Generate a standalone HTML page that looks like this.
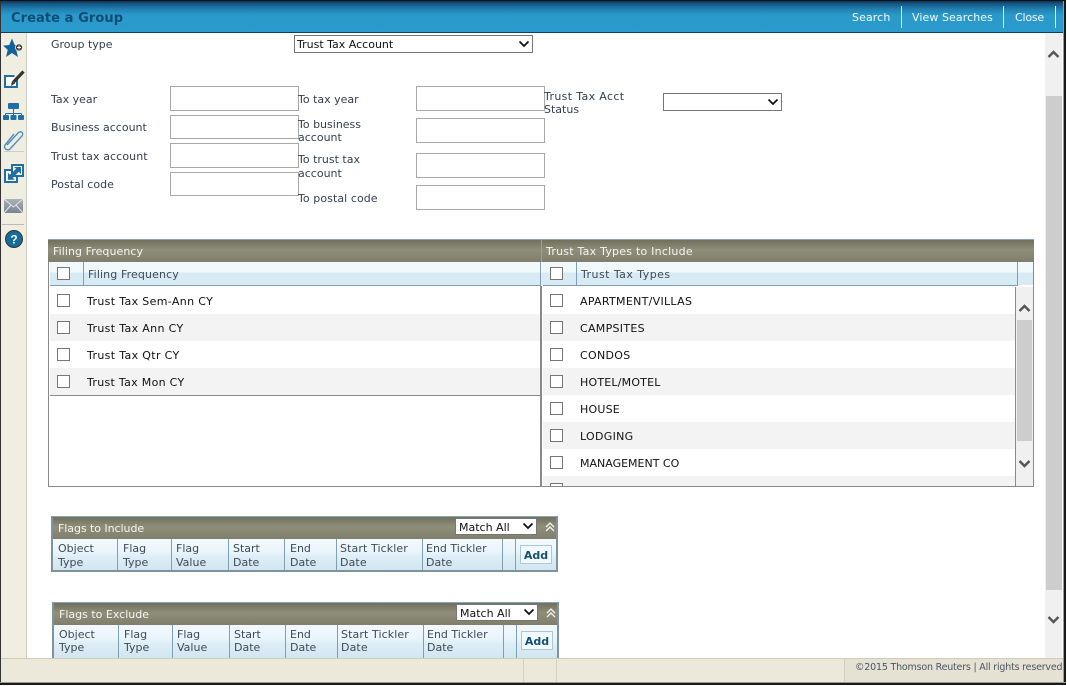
<!DOCTYPE html>
<html><head><meta charset="utf-8">
<style>
html,body{margin:0;padding:0;background:#fff}
body{width:1067px;height:686px;position:relative;overflow:hidden;font-family:"DejaVu Sans","Liberation Sans",sans-serif;font-size:11px;color:#333f4e}
.a{position:absolute}
.t{position:absolute;white-space:nowrap;line-height:14px}
.w{position:absolute;line-height:13px}
.in{position:absolute;box-sizing:border-box;border:1px solid #a8a8a8;background:#fff;width:129px}
.cb{position:absolute;box-sizing:border-box;width:13px;height:13px;border:1px solid #767676;background:#fff}
.gh{position:absolute;height:22px;background:linear-gradient(#71705d,#8f8e7b 45%,#7f7e6b);color:#f6f6f0;line-height:23px;border-top:1px solid #8aa5b5;box-sizing:content-box}
.ch{position:absolute;background:linear-gradient(#f2f9fd 0,#f0f8fc 45%,#d8ebf5 46%,#d8ebf5 100%);color:#3e4a56}
.fl{background:linear-gradient(#f2f9fd,#eaf5fb 40%,#dcedf6 60%,#d2e6f1)}
.r{position:absolute;height:27px;line-height:29px;color:#111;white-space:nowrap}
.alt{background:#f3f3f3}
.sel{position:absolute;box-sizing:border-box;background:#fff;border:1px solid #767676;color:#111;line-height:14px;padding-left:3px;white-space:nowrap}
.v{position:absolute;top:0;bottom:0;width:1px;background:#7fa0b3}
</style></head><body>

<!-- header -->
<div class="a" style="left:0;top:0;width:1067px;height:33px;background:linear-gradient(#0a2338 0,#14507a 3px,#1f7fb0 9px,#2a9acb 15px,#2a9bcc 100%)"></div>
<div class="a" style="left:0;top:32px;width:1067px;height:1px;background:#0f3f5c"></div>
<div class="t" style="left:11px;top:12px;font-size:13px;font-weight:bold;color:#0f4c74;letter-spacing:.08px">Create a Group</div>
<div class="t" style="left:852px;top:11px;color:#f2f9fc;letter-spacing:.1px">Search</div>
<div class="a" style="left:901px;top:6px;width:1px;height:22px;background:#d8eef7"></div>
<div class="t" style="left:912px;top:11px;color:#f2f9fc;letter-spacing:.08px">View Searches</div>
<div class="a" style="left:1003px;top:6px;width:1px;height:22px;background:#d8eef7"></div>
<div class="t" style="left:1015px;top:11px;color:#f2f9fc;letter-spacing:-.2px">Close</div>
<div class="a" style="left:1055px;top:6px;width:1px;height:22px;background:#d8eef7"></div>

<!-- sidebar -->
<div class="a" style="left:1px;top:33px;width:25px;height:625px;background:#f0eee1;border-right:1px solid #cfcdbf"></div>
<svg class="a" style="left:1px;top:33px" width="26" height="225" viewBox="0 0 26 225">
<defs><linearGradient id="m" x1="0" y1="0" x2="0" y2="1"><stop offset="0" stop-color="#a9b3bc"/><stop offset="1" stop-color="#77838e"/></linearGradient></defs>
<path d="M11 5.500l2.700 6.500 6.300.6-4.700 4.200 1.600 7.200L11 20l-5.900 3.999 1.600-7.200L2 12.600l6.300-.6z" fill="#14609c"/>
<circle cx="18" cy="14.500" r="3.600" fill="#3f3f3f" stroke="#f0eee1" stroke-width=".8"/><path d="M16 14.500h4M18 12.500v4" stroke="#fff" stroke-width="1"/>
<path d="M13.500 43H4v11h12v-8" fill="#fff" stroke="#1f6ea6" stroke-width="2"/>
<path d="M22.500 38.500L12.500 49" stroke="#333" stroke-width="3.200" fill="none"/>
<path d="M10 53l1-5 3 2.500z" fill="#333"/>
<rect x="7" y="70" width="11" height="6" rx="1" fill="#1f6ea6"/>
<path d="M12.500 76v4M4.500 80.500h16M4.500 80.500v2M12.500 80v2M20.500 80.500v2" stroke="#1f6ea6" fill="none"/>
<rect x="2" y="82" width="6" height="5" rx="1" fill="#1f6ea6"/><rect x="9.500" y="82" width="6" height="5" rx="1" fill="#1f6ea6"/><rect x="17" y="82" width="6" height="5" rx="1" fill="#1f6ea6"/>
<path d="M6 112l11-12c3-3 6 0 4 3l-12 13c-2 2-7 0-5-4l9-11" fill="none" stroke="#4d8fc0" stroke-width="1.400"/>
<path d="M3 118.500h20" stroke="#ccc"/>
<rect x="4" y="137" width="12" height="12" fill="#fff" stroke="#1f6ea6" stroke-width="2"/>
<rect x="11" y="132" width="11" height="11" fill="#fff" stroke="#1f6ea6" stroke-width="2"/>
<path d="M13 134h7v7l-2.200-2.200-6 6 2 2H7v-7l2 2 6-6z" fill="#1f6ea6"/>
<path d="M3 166h19v14H3z" fill="url(#m)"/><path d="M3 166l9.500 8 9.500-8M3 180l7-8M22 180l-7-8" stroke="#e5e5e5" fill="none"/>
<path d="M1 191.500h22" stroke="#bbb"/>
<circle cx="13" cy="206" r="8.500" fill="#156c9c" stroke="#333" stroke-width="1"/>
<text x="13" y="210.500" text-anchor="middle" font-family="Liberation Sans" font-weight="bold" font-size="12" fill="#fff">?</text>
</svg>

<!-- form -->
<div class="t" style="left:51px;top:38px">Group type</div>
<div class="sel" style="left:294px;top:35px;width:239px;height:18px;line-height:17px;padding-left:2px">Trust Tax Account</div>
<svg class="a" style="left:518px;top:40px" width="12" height="8"><path d="M1.500 1.500L6 6l4.500-4.500" fill="none" stroke="#111" stroke-width="1.800"/></svg>

<div class="t" style="left:51px;top:93px">Tax year</div>
<div class="t" style="left:51px;top:121px">Business account</div>
<div class="t" style="left:51px;top:150px;letter-spacing:.1px">Trust tax account</div>
<div class="t" style="left:51px;top:178px">Postal code</div>
<div class="in" style="left:170px;top:86px;height:25px"></div>
<div class="in" style="left:170px;top:115px;height:24px"></div>
<div class="in" style="left:170px;top:143px;height:25px"></div>
<div class="in" style="left:170px;top:172px;height:24px"></div>

<div class="t" style="left:298px;top:93px">To tax year</div>
<div class="w" style="left:298px;top:118px;width:100px">To business<br>account</div>
<div class="w" style="left:298px;top:153px;width:100px;line-height:14px">To trust tax<br>account</div>
<div class="t" style="left:298px;top:192px;letter-spacing:.07px">To postal code</div>
<div class="in" style="left:416px;top:86px;height:25px"></div>
<div class="in" style="left:416px;top:118px;height:25px"></div>
<div class="in" style="left:416px;top:153px;height:25px"></div>
<div class="in" style="left:416px;top:185px;height:25px"></div>

<div class="w" style="left:544px;top:90px;width:110px"><span style="letter-spacing:.35px">Trust Tax Acct</span><br>Status</div>
<div class="sel" style="left:663px;top:93px;width:119px;height:18px"></div>
<svg class="a" style="left:767px;top:98px" width="12" height="8"><path d="M1.500 1.500L6 6l4.500-4.500" fill="none" stroke="#111" stroke-width="1.800"/></svg>

<!-- grids outer -->
<div class="a" style="left:48px;top:239px;width:986px;height:248px;box-sizing:border-box;border:1px solid #8a8a8a;border-top:0"></div>
<div class="gh" style="left:48px;top:239px;width:488px;padding-left:5px;letter-spacing:.07px">Filing Frequency</div>
<div class="ch" style="left:50px;top:262px;width:490px;height:23px;border-bottom:1px solid #7fa0b3">
  <div class="v" style="left:33px"></div>
  <div class="t" style="left:38px;top:6px;letter-spacing:.12px">Filing Frequency</div>
</div>
<div class="cb" style="left:57px;top:267px"></div>
<div class="r" style="left:50px;top:287px;width:490px;text-indent:37px;letter-spacing:.35px">Trust Tax Sem-Ann CY</div>
<div class="r alt" style="left:50px;top:314px;width:490px;text-indent:37px;letter-spacing:.35px">Trust Tax Ann CY</div>
<div class="r" style="left:50px;top:341px;width:490px;text-indent:37px;letter-spacing:.35px">Trust Tax Qtr CY</div>
<div class="r alt" style="left:50px;top:368px;width:490px;text-indent:37px;letter-spacing:.3px">Trust Tax Mon CY</div>
<div class="a" style="left:50px;top:395px;width:490px;height:1px;background:#8a8a8a"></div>
<div class="cb" style="left:57px;top:294px"></div>
<div class="cb" style="left:57px;top:321px"></div>
<div class="cb" style="left:57px;top:348px"></div>
<div class="cb" style="left:57px;top:375px"></div>

<!-- right grid -->
<div class="a" style="left:540px;top:286px;width:2px;height:201px;background:#8a8a8a"></div>
<div class="gh" style="left:541px;top:239px;width:488px;padding-left:4px;border-left:1px solid #8aa5b5;letter-spacing:.23px">Trust Tax Types to Include</div>
<div class="ch" style="left:540px;top:262px;width:493px;height:23px">
  <div class="a" style="left:0;top:0;width:1px;height:24px;background:#7fa0b3"></div>
  <div class="v" style="left:36px"></div>
  <div class="v" style="left:477px"></div>
  <div class="a" style="left:3px;top:23px;width:475px;height:1px;background:#7fa0b3"></div>
  <div class="t" style="left:41px;top:6px;letter-spacing:.45px">Trust Tax Types</div>
</div>
<div class="cb" style="left:550px;top:267px"></div>
<div class="a" style="left:543px;top:286px;width:472px;height:200px;overflow:hidden">
  <div class="r" style="left:0;top:1px;width:472px;text-indent:37px;letter-spacing:.3px">APARTMENT/VILLAS</div>
  <div class="r alt" style="left:0;top:28px;width:472px;text-indent:37px;letter-spacing:.3px">CAMPSITES</div>
  <div class="r" style="left:0;top:55px;width:472px;text-indent:37px;letter-spacing:.3px">CONDOS</div>
  <div class="r alt" style="left:0;top:82px;width:472px;text-indent:37px;letter-spacing:.2px">HOTEL/MOTEL</div>
  <div class="r" style="left:0;top:109px;width:472px;text-indent:37px;letter-spacing:.2px">HOUSE</div>
  <div class="r alt" style="left:0;top:136px;width:472px;text-indent:37px;letter-spacing:.3px">LODGING</div>
  <div class="r" style="left:0;top:163px;width:472px;text-indent:37px">MANAGEMENT CO</div>
  <div class="r alt" style="left:0;top:190px;width:472px"></div>
  <div class="cb" style="left:7px;top:8px"></div>
  <div class="cb" style="left:7px;top:35px"></div>
  <div class="cb" style="left:7px;top:62px"></div>
  <div class="cb" style="left:7px;top:89px"></div>
  <div class="cb" style="left:7px;top:116px"></div>
  <div class="cb" style="left:7px;top:143px"></div>
  <div class="cb" style="left:7px;top:170px"></div>
  <div class="cb" style="left:7px;top:197px"></div>
</div>
<div class="a" style="left:1015px;top:287px;width:17px;height:199px;background:#f0f0f0;border-left:1px solid #8a8a8a"></div>
<div class="a" style="left:1017px;top:320px;width:15px;height:121px;background:#cdcdcd"></div>
<svg class="a" style="left:1017px;top:302px" width="15" height="12"><path d="M2.500 9L7.500 4l5 5" fill="none" stroke="#555" stroke-width="2.400"/></svg>
<svg class="a" style="left:1017px;top:458px" width="15" height="12"><path d="M2.500 3L7.500 8l5-5" fill="none" stroke="#555" stroke-width="2.400"/></svg>

<!-- flags include -->
<div class="a" style="left:51px;top:516px;width:507px;height:56px;box-sizing:border-box;border:2px solid #80929d;border-top:1px solid #8aa5b5;background:#dcecf5">
  <div class="a" style="left:0;top:0;width:503px;height:22px;background:linear-gradient(#71705d,#8f8e7b 45%,#7f7e6b);color:#f6f6f0;line-height:23px;text-indent:5px;letter-spacing:-.05px">Flags to Include</div>
  <div class="ch fl" style="left:0;top:22px;width:503px;height:31px">
    <div class="v" style="left:64px"></div><div class="v" style="left:118px"></div><div class="v" style="left:175px"></div><div class="v" style="left:231px"></div><div class="v" style="left:283px"></div><div class="v" style="left:369px"></div><div class="v" style="left:449px"></div><div class="v" style="left:462px"></div>
    <div class="w" style="left:5px;top:3px;line-height:14px">Object<br>Type</div>
    <div class="w" style="left:70px;top:3px;line-height:14px">Flag<br>Type</div>
    <div class="w" style="left:123px;top:3px;line-height:14px">Flag<br>Value</div>
    <div class="w" style="left:180px;top:3px;line-height:14px">Start<br>Date</div>
    <div class="w" style="left:237px;top:3px;line-height:14px">End<br>Date</div>
    <div class="w" style="left:287px;top:3px;line-height:14px;letter-spacing:.1px">Start Tickler<br>Date</div>
    <div class="w" style="left:373px;top:3px;line-height:14px">End Tickler<br>Date</div>
  </div>
</div>
<div class="sel" style="left:455px;top:518px;width:82px;height:17px;line-height:17px">Match All</div>
<svg class="a" style="left:522px;top:522px" width="12" height="8"><path d="M1.500 1.500L6 6l4.500-4.500" fill="none" stroke="#111" stroke-width="1.800"/></svg>
<svg class="a" style="left:544px;top:521px" width="12" height="12"><path d="M2 6l4-4 4 4M2 10l4-4 4 4" fill="none" stroke="#f4f4ee" stroke-width="1.300"/></svg>
<div class="a" style="left:520px;top:545px;width:32px;height:19px;box-sizing:border-box;border:1px solid #a9c8d8;background:#f2f9fc;color:#144f73;font-weight:bold;text-align:center;line-height:19px">Add</div>

<!-- flags exclude -->
<div class="a" style="left:52px;top:602px;width:507px;height:56px;box-sizing:border-box;border:2px solid #80929d;border-top:1px solid #8aa5b5;border-bottom:0;background:#dcecf5">
  <div class="a" style="left:0;top:0;width:503px;height:22px;background:linear-gradient(#71705d,#8f8e7b 45%,#7f7e6b);color:#f6f6f0;line-height:23px;text-indent:5px">Flags to Exclude</div>
  <div class="ch fl" style="left:0;top:22px;width:503px;height:33px">
    <div class="v" style="left:64px"></div><div class="v" style="left:118px"></div><div class="v" style="left:175px"></div><div class="v" style="left:231px"></div><div class="v" style="left:283px"></div><div class="v" style="left:369px"></div><div class="v" style="left:449px"></div><div class="v" style="left:462px"></div>
    <div class="w" style="left:5px;top:3px">Object<br>Type</div>
    <div class="w" style="left:70px;top:3px">Flag<br>Type</div>
    <div class="w" style="left:123px;top:3px">Flag<br>Value</div>
    <div class="w" style="left:180px;top:3px">Start<br>Date</div>
    <div class="w" style="left:236px;top:3px">End<br>Date</div>
    <div class="w" style="left:287px;top:3px;letter-spacing:.1px">Start Tickler<br>Date</div>
    <div class="w" style="left:373px;top:3px">End Tickler<br>Date</div>
  </div>
</div>
<div class="sel" style="left:456px;top:604px;width:82px;height:17px;line-height:17px">Match All</div>
<svg class="a" style="left:523px;top:608px" width="12" height="8"><path d="M1.500 1.500L6 6l4.500-4.500" fill="none" stroke="#111" stroke-width="1.800"/></svg>
<svg class="a" style="left:545px;top:607px" width="12" height="12"><path d="M2 6l4-4 4 4M2 10l4-4 4 4" fill="none" stroke="#f4f4ee" stroke-width="1.300"/></svg>
<div class="a" style="left:521px;top:631px;width:32px;height:19px;box-sizing:border-box;border:1px solid #a9c8d8;background:#f2f9fc;color:#144f73;font-weight:bold;text-align:center;line-height:19px">Add</div>

<!-- page scrollbar -->
<div class="a" style="left:1045px;top:33px;width:17px;height:625px;background:#f0f0f0"></div>
<div class="a" style="left:1046px;top:96px;width:16px;height:494px;background:#cdcdcd"></div>
<svg class="a" style="left:1046px;top:48px" width="15" height="12"><path d="M2.500 9L7.500 4l5 5" fill="none" stroke="#555" stroke-width="2.400"/></svg>
<svg class="a" style="left:1046px;top:614px" width="15" height="12"><path d="M2.500 3L7.500 8l5-5" fill="none" stroke="#555" stroke-width="2.400"/></svg>

<!-- footer -->
<div class="a" style="left:0;top:658px;width:1064px;height:24px;background:#ece9db;border-top:1px solid #cfccbc;box-sizing:border-box"></div>
<div class="a" style="left:523px;top:659px;width:1px;height:23px;background:#d4d1c2"></div>
<div class="a" style="left:556px;top:659px;width:1px;height:23px;background:#d4d1c2"></div>
<div class="a" style="left:844px;top:659px;width:219px;height:23px;background:#e5e1d3;border-left:1px solid #d0cdbe"></div>
<div class="t" style="left:855px;top:661px;font-size:9.500px;letter-spacing:-.2px;color:#4b5663">©2015 Thomson Reuters | All rights reserved</div>

<!-- outer frame -->
<div class="a" style="left:0;top:0;width:1px;height:686px;background:#333"></div>
<div class="a" style="left:1063px;top:0;width:1px;height:686px;background:#9a9a9a"></div>
<div class="a" style="left:1064px;top:0;width:2px;height:686px;background:#1a1a1a"></div>
<div class="a" style="left:1066px;top:0;width:1px;height:686px;background:#fff"></div>
<div class="a" style="left:0;top:0;width:1066px;height:1px;background:#06121c"></div>
<div class="a" style="left:0;top:682px;width:1066px;height:1px;background:#9a9a9a"></div>
<div class="a" style="left:0;top:683px;width:1066px;height:2px;background:#1a1a1a"></div>
<div class="a" style="left:0;top:685px;width:1067px;height:1px;background:#fff"></div>
</body></html>
